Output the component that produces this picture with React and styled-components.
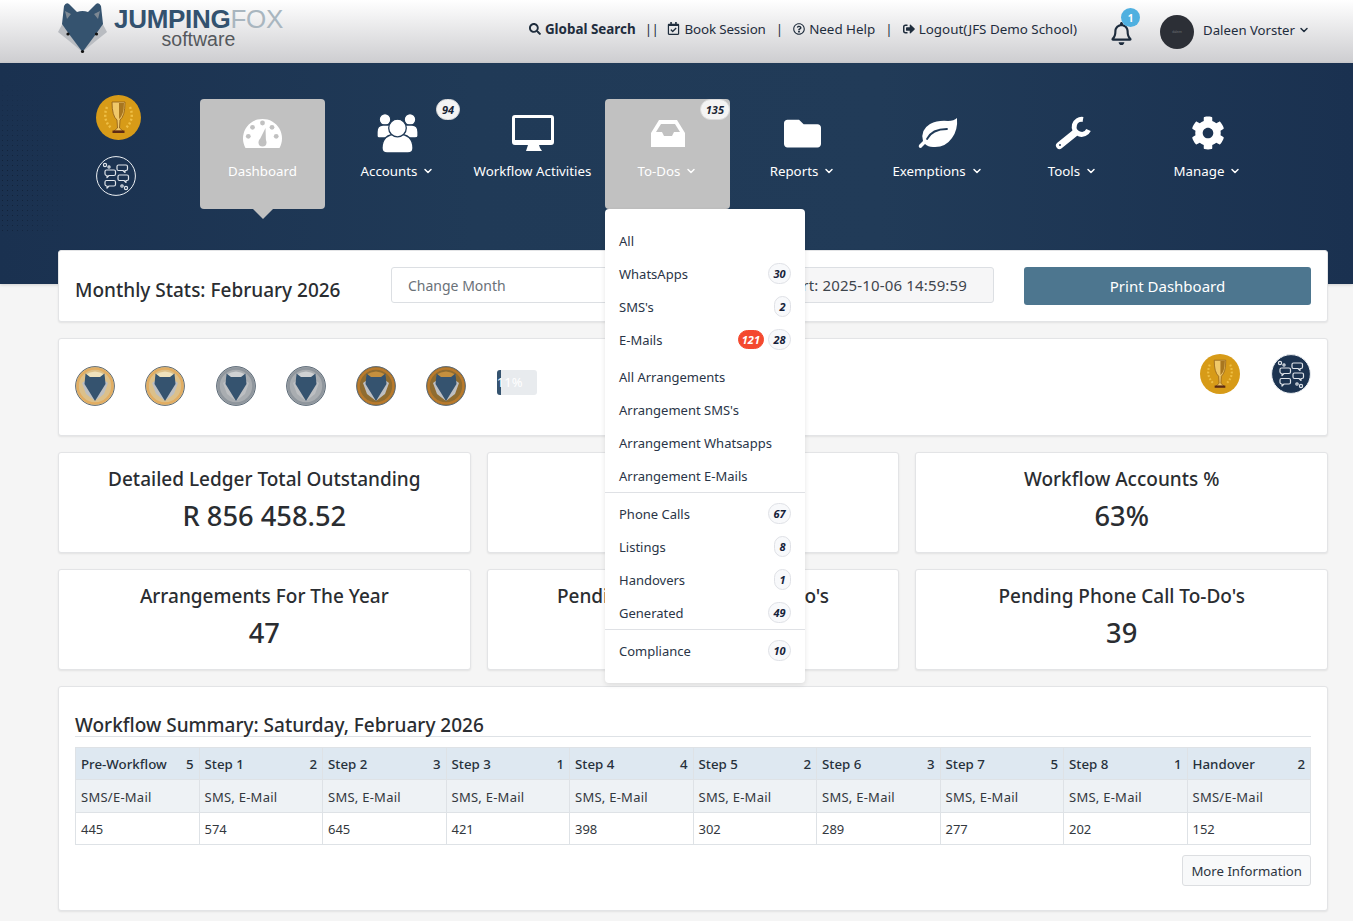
import React from 'react'
import styled, { createGlobalStyle } from 'styled-components'
import { FaFolder, FaCog, FaSearch, FaRegCalendarCheck, FaRegQuestionCircle, FaSignOutAlt, FaRegBell } from 'react-icons/fa'
import { FiChevronDown } from 'react-icons/fi'

const GlobalStyle = createGlobalStyle`
    * { box-sizing: border-box; }
    html, body { margin: 0; padding: 0; height: 921px; overflow: hidden; }
    body {
        background: #f5f5f5;
        font-family: "Noto Sans", "Open Sans", sans-serif;
        color: #212529;
    }
`

const Header = styled.header`
    height: 63px;
    display: flex;
    align-items: center;
    padding: 0 43px 0 58px;
    background: linear-gradient(180deg, #ffffff 0%, #cdcdd0 100%);
`
const Logo = styled.div`
    display: flex;
    align-items: flex-start;
    height: 63px;
    padding-top: 2px;
`
const LogoText = styled.div`
    margin: 4px 0 0 6px;
    font-family: "Liberation Sans", Arial, sans-serif;
    text-align: center;
    line-height: 1;
`
const LogoTitle = styled.div`
    font-size: 26px;
    font-weight: 700;
    letter-spacing: -0.3px;
    color: #33526f;
    span { font-weight: 400; color: #a9b6bf; }
`
const LogoSub = styled.div`
    margin-top: -2px;
    font-size: 19.5px;
    color: #55585c;
`
const TopLinks = styled.nav`
    margin-left: auto;
    display: flex;
    align-items: center;
    gap: 7px;
    font-size: 13.4px;
    color: #1f2d3d;
    margin-top: -6px;
`
const TopLink = styled.span`
    display: inline-flex;
    align-items: center;
    gap: 4px;
    font-weight: ${(p) => (p.$bold ? 700 : 400)};
    letter-spacing: ${(p) => (p.$tight ? '-0.15px' : '0')};
    white-space: nowrap;
    svg { flex: none; }
`
const Sep = styled.span`
    margin: 0 ${(p) => (p.$double ? 2 : 3)}px;
    letter-spacing: ${(p) => (p.$double ? '-0.5px' : '0')};
`
const Bell = styled.div`
    position: relative;
    margin: 4px 27px 0 33px;
    display: flex;
    font-size: 23px;
    color: #1c2b3c;
`
const BellBadge = styled.span`
    position: absolute;
    top: -14px;
    left: 11px;
    width: 19px;
    height: 19px;
    border-radius: 50%;
    background: #4fb0e0;
    color: #fff;
    font-size: 10px;
    font-weight: 700;
    display: flex;
    align-items: center;
    justify-content: center;
`
const Avatar = styled.div`
    width: 34px;
    height: 34px;
    border-radius: 50%;
    background: #2c2f36;
    margin-right: 9px;
    color: #77787c;
    font-size: 3px;
    display: flex;
    align-items: center;
    justify-content: center;
`
const UserName = styled.span`
    display: inline-flex;
    align-items: center;
    gap: 3px;
    margin-top: -3px;
    font-size: 13.2px;
    color: #1f2d3d;
`

const Hero = styled.section`
    position: relative;
    height: 221px;
    background: linear-gradient(90deg, #1a3150 0%, #203a57 35%, #213b58 65%, #1a3150 100%);
    padding: 32px 0 0 96px;
    display: flex;
    overflow: visible;
    box-shadow: 0 1px 3px rgba(0, 0, 0, 0.15);
    &::before {
        content: '';
        position: absolute;
        left: 0;
        top: 20px;
        width: 70px;
        height: 150px;
        background: radial-gradient(circle, rgba(0, 0, 0, 0.3) 0.7px, transparent 1px) 0 0 / 5px 5px;
        -webkit-mask-image: radial-gradient(ellipse at 0 70%, #000 20%, transparent 75%);
        mask-image: radial-gradient(ellipse at 0 70%, #000 20%, transparent 75%);
    }
`
const AwardColumn = styled.div`
    width: 104px;
    display: flex;
    flex-direction: column;
    align-items: flex-start;
    gap: 16px;
    position: relative;
`
const MainNav = styled.nav`
    display: flex;
    gap: 10px;
    align-items: flex-start;
    position: relative;
    margin-top: 4px;
`
const NavItem = styled.div`
    position: relative;
    width: 125px;
    height: 110px;
    border-radius: 4px;
    background: ${(p) => (p.$active ? '#c1c1c1' : 'transparent')};
    color: #fff;
    display: flex;
    flex-direction: column;
    align-items: center;
    padding-top: 14px;
    font-size: 13.3px;
`
const NavArrow = styled.span`
    position: absolute;
    left: 50%;
    bottom: -10px;
    margin-left: -10px;
    border-left: 10px solid transparent;
    border-right: 10px solid transparent;
    border-top: 10px solid #c1c1c1;
`
const NavIcon = styled.div`
    height: 40px;
    display: flex;
    align-items: center;
    justify-content: center;
    margin-bottom: 9px;
`
const NavLabel = styled.div`
    display: flex;
    align-items: center;
    gap: 5px;
    white-space: nowrap;
`
const NavBadge = styled.span`
    position: absolute;
    top: 0;
    right: 0;
    min-width: 24px;
    height: 21px;
    padding: 0 5px;
    border-radius: 11px;
    background: #f4f4f4;
    border: 1px solid #dcdcdc;
    color: #1a2433;
    font-size: 11px;
    font-weight: 700;
    font-style: italic;
    display: flex;
    align-items: center;
    justify-content: center;
`

const Dropdown = styled.div`
    position: absolute;
    left: 405px;
    top: 110px;
    width: 200px;
    height: 474px;
    z-index: 10;
    background: #fff;
    border-radius: 4px;
    padding: 15px 0;
    box-shadow: 0 2px 5px rgba(0, 0, 0, 0.1);
    color: #2a3547;
    font-size: 13px;
`
const DropItem = styled.div`
    height: 33px;
    padding: 0 14px;
    display: flex;
    align-items: center;
    gap: 4px;
    white-space: nowrap;
`
const DropLabel = styled.span`
    margin-right: auto;
`
const DropGroup = styled.div`
    padding-top: ${(p) => p.$top || 0}px;
    padding-bottom: ${(p) => p.$bottom || 0}px;
    border-bottom: ${(p) => (p.$line ? '1px solid #dfe1e5' : 'none')};
`
const Pill = styled.span`
    min-width: ${(p) => (p.$wide ? 23 : 17)}px;
    height: ${(p) => (p.$red ? 19 : 21)}px;
    padding: 0 ${(p) => (p.$red ? 3 : 4)}px;
    border-radius: 11px;
    border: 1px solid ${(p) => (p.$red ? '#f4492f' : '#dfe1e6')};
    background: ${(p) => (p.$red ? '#f4492f' : '#f8f9fb')};
    color: ${(p) => (p.$red ? '#fff' : '#16233a')};
    font-size: 11px;
    font-weight: 700;
    font-style: italic;
    display: flex;
    align-items: center;
    justify-content: center;
`

const Content = styled.main`
    position: relative;
    margin-top: -34px;
    padding: 0 25px 0 58px;
    display: flex;
    flex-direction: column;
    gap: 16px;
`
const Card = styled.div`
    background: #fff;
    border: 1px solid #e3e4e6;
    border-radius: 3px;
    box-shadow: 0 1px 2px rgba(0, 0, 0, 0.08);
`
const StatsBar = styled(Card)`
    height: 72px;
    display: flex;
    align-items: center;
    padding: 0 16px;
`
const BarTitle = styled.h2`
    margin: 7px 0 0;
    width: 316px;
    flex: none;
    font-size: 19px;
    font-weight: 500;
    color: #2a2d31;
    white-space: nowrap;
`
const FieldBox = styled.div`
    height: 36px;
    margin-top: -2px;
    padding: 0 16px;
    display: flex;
    align-items: center;
    font-size: ${(p) => (p.$muted ? 15 : 14)}px;
    letter-spacing: ${(p) => (p.$muted ? '0.15px' : '0')};
    border: 1px solid #dcdfe3;
    border-radius: 3px;
    white-space: nowrap;
    color: ${(p) => (p.$muted ? '#3e454d' : '#6a7178')};
    background: ${(p) => (p.$muted ? '#f6f6f7' : '#fff')};
    width: ${(p) => p.$width}px;
    justify-content: ${(p) => (p.$muted ? 'flex-end' : 'flex-start')};
    padding-right: ${(p) => (p.$muted ? 26 : 16)}px;
    margin-left: ${(p) => p.$left || 0}px;
`
const PrintButton = styled.button`
    flex: none;
    width: 287px;
    height: 38px;
    margin-left: 30px;
    border: 0;
    border-radius: 3px;
    background: #4d768f;
    color: #fff;
    font-family: inherit;
    font-size: 15px;
`
const MedalsCard = styled(Card)`
    height: 98px;
    display: flex;
    justify-content: space-between;
    padding: 15px 16px 0;
`
const MedalRow = styled.div`
    display: flex;
    align-items: flex-start;
    gap: 30.3px;
    padding-top: 12px;
`
const Progress = styled.div`
    position: relative;
    margin-top: 4px;
    width: 40px;
    height: 25px;
    border-radius: 3px;
    background: #e8ebee;
    overflow: hidden;
    color: #fff;
    font-size: 13px;
    line-height: 25px;
    text-align: center;
    padding-right: 15px;
`
const ProgressFill = styled.span`
    position: absolute;
    left: 0;
    top: 0;
    bottom: 0;
    background: #35536f;
`
const ProgressText = styled.span`
    position: relative;
`
const AwardRow = styled.div`
    display: flex;
    gap: 31px;
`
const StatGrid = styled.div`
    display: grid;
    grid-template-columns: repeat(3, 1fr);
    gap: 16px;
`
const StatCard = styled(Card)`
    height: 101px;
    text-align: center;
    padding-top: 12px;
`
const StatTitle = styled.div`
    font-size: 19px;
    font-weight: 500;
    line-height: 28px;
    color: #2a2d31;
    white-space: nowrap;
`
const StatValue = styled.div`
    margin-top: 5px;
    font-size: 27.3px;
    font-weight: 500;
    line-height: 36px;
    color: #2a2d31;
`
const SummaryCard = styled(Card)`
    height: 225px;
    padding: 25px 16px 0;
`
const SummaryTitle = styled.h2`
    margin: 0 0 10px;
    height: 25px;
    border-bottom: 1px solid #dee2e6;
    font-size: 19px;
    font-weight: 500;
    line-height: 26px;
    color: #2a2d31;
`
const Table = styled.table`
    width: 100%;
    border-collapse: collapse;
    table-layout: fixed;
    font-size: 13px;
    color: #33383e;
`
const Cell = styled.td`
    border: 1px solid #dee2e6;
    height: 32.4px;
    padding: ${(p) => (p.$head ? 0 : 2)}px 5px 0;
    background: ${(p) => p.$bg || '#fff'};
    letter-spacing: ${(p) => (p.$spaced ? '0.25px' : '0')};
    white-space: nowrap;
`
const HeadCell = styled.div`
    display: flex;
    justify-content: space-between;
    font-size: 13.3px;
    font-weight: 500;
    color: #26303b;
`
const TableFooter = styled.div`
    display: flex;
    justify-content: flex-end;
    margin-top: 10px;
`
const MoreButton = styled.button`
    height: 31px;
    padding: 0 8px;
    border: 1px solid #dcdee1;
    border-radius: 3px;
    background: #f8f9fa;
    color: #2b3440;
    font-family: inherit;
    font-size: 13.2px;
`

const BigFox = () => (
    <svg width="50" height="52" viewBox="0 0 50 52">
        <path d="M0 30 L7 17 L24.5 50 L10 38 Z M49 30 L42 17 L24.5 50 L39 38 Z" fill="#b9bcc1" />
        <path d="M6 4 Q8 0 11 2 L19 10 Q24.5 8 30 10 L38 2 Q41 0 43 4 L45 22 L38 32 L24.5 50 L11 32 L4 22 Z" fill="#35536f" />
        <path d="M7 9 l6 3 l-4 5 Z M42 9 l-6 3 l4 5 Z" fill="#7d8893" />
        <circle cx="10" cy="32" r="1.6" fill="#111" />
        <circle cx="38.5" cy="32" r="1.6" fill="#111" />
        <circle cx="24.5" cy="49.5" r="1.6" fill="#111" />
    </svg>
)

const Medal = ({ rim, face, top }) => (
    <svg width="40" height="40" viewBox="0 0 40 40">
        <circle cx="20" cy="20" r="19.4" fill={face} stroke="#5d6b78" strokeWidth="1" />
        <circle cx="20" cy="20" r="17.4" fill="none" stroke={rim} strokeWidth="2.4" />
        <path d="M10 9 Q20 2 30 9 L28 14 H12 Z" fill={top} />
        <path d="M7 17 L11 14 L20 35 L11 28 Z M33 17 L29 14 L20 35 L29 28 Z" fill="#bdbfc2" />
        <path d="M10.5 7.5 L15 11 L25 11 L29.5 7.5 L30.5 18 L20 35 L9.5 18 Z" fill="#35536f" />
    </svg>
)

const Trophy = ({ size }) => (
    <svg width={size} height={size} viewBox="0 0 45 45">
        <circle cx="22.5" cy="22.5" r="22.5" fill="#d79b18" />
        <g fill="none" stroke="#efbf45" strokeWidth="2.4" strokeDasharray="2 2">
            <path d="M11 12 Q6 24 15 33" />
            <path d="M34 12 Q39 24 30 33" />
        </g>
        <path d="M16 7 H29 Q29 21 24 25 L23.5 33 L27 36 H18 L21.5 33 L21 25 Q16 21 16 7 Z" fill="#f0c86a" stroke="#8a5a1a" strokeWidth="0.8" />
        <path d="M23 8 H28 Q28 20 23 24 Z" fill="#a8761f" />
        <rect x="16.5" y="35.5" width="12" height="2.5" fill="#5d2b14" />
    </svg>
)

const ChatBadge = ({ size, filled }) => (
    <svg width={size} height={size} viewBox="0 0 40 40">
        <circle cx="20" cy="20" r="19.4" fill={filled ? '#1c3350' : 'none'} stroke="#eef1f4" strokeWidth="1" />
        <g fill="none" stroke="#dfe4ea" strokeWidth="1.2" strokeLinejoin="round">
            <path d="M10.5 14 H18 Q19.5 14 19.5 15.5 V18 Q19.5 19.5 18 19.5 H13 L11 21.5 V19.5 Q9 19.5 9 18 V15.5 Q9 14 10.5 14 Z" />
            <path d="M10.5 24.5 H18 Q19.5 24.5 19.5 26 V28.5 Q19.5 30 18 30 H13 L11 32 V30 Q9 30 9 28.5 V26 Q9 24.5 10.5 24.5 Z" />
            <path d="M22.5 9 H30 Q31.5 9 31.5 10.5 V13 Q31.5 14.5 30 14.5 H29 V16.5 L27 14.5 H22.5 Q21 14.5 21 13 V10.5 Q21 9 22.5 9 Z" />
            <path d="M23.5 19 H31 Q32.5 19 32.5 20.5 V23 Q32.5 24.5 31 24.5 H30 V26.5 L28 24.5 H23.5 Q22 24.5 22 23 V20.5 Q22 19 23.5 19 Z" />
            <circle cx="9" cy="9" r="1.6" />
            <circle cx="13" cy="11" r="1.1" />
            <circle cx="26" cy="30" r="1.2" />
            <circle cx="30" cy="32" r="1.6" />
        </g>
    </svg>
)

const GaugeIcon = () => (
    <svg width="39" height="30" viewBox="0 0 39 30">
        <path d="M2.5 30 A19.5 19.5 0 1 1 36.5 30 Z" fill="#fff" />
        <g fill="#c1c1c1">
            <circle cx="19.5" cy="5" r="2.4" />
            <circle cx="9.5" cy="9.3" r="2.4" />
            <circle cx="29" cy="9.3" r="2.4" />
            <circle cx="5.3" cy="18.3" r="2.4" />
            <circle cx="33.2" cy="18.3" r="2.4" />
            <circle cx="19.5" cy="24.5" r="4" />
            <path d="M22.5 10 L23 25 L16 23 Z" />
        </g>
    </svg>
)

const UsersIcon = () => (
    <svg width="42" height="40" viewBox="0 0 42 40" fill="#fff" stroke="#203a57" strokeWidth="1.3">
        <circle cx="8" cy="6.5" r="5.8" />
        <circle cx="33" cy="6.5" r="5.8" />
        <path d="M0 19 Q0 12 6 12 H35 Q41 12 41 19 V23 Q41 25 38 25 H3 Q0 25 0 23 Z" />
        <path d="M5 35 Q5 21 20.5 21 Q36 21 36 35 Q36 40 31 40 H10 Q5 40 5 35 Z" />
        <circle cx="20.5" cy="15" r="8.8" />
    </svg>
)

const MonitorIcon = () => (
    <svg width="42" height="36" viewBox="0 0 42 36">
        <path fillRule="evenodd" d="M3 0 H39 Q42 0 42 3 V27 Q42 30 39 30 H27 L28 33 L30 36 H14 L15 33 L16 30 H3 Q0 30 0 27 V3 Q0 0 3 0 Z M3 3 V25 H39 V3 Z" fill="#fff" />
    </svg>
)

const InboxIcon = () => (
    <svg width="34" height="27" viewBox="0 0 34 27">
        <path fillRule="evenodd" d="M8 0 H26 L34 13 V27 H0 V13 Z M10 4 L5 12 H11 L13 16 H21 L23 12 H29 L24 4 Z" fill="#fff" />
    </svg>
)

const LeafIcon = () => (
    <svg width="40" height="30" viewBox="0 0 40 30">
        <path d="M39 0 Q40 12 34 20 Q27 30 15 29 Q10 29 7 26 L3 30 Q0 30 1 27 L5 23 Q2 12 12 6 Q20 2 30 3 Q36 3 39 0 Z" fill="#fff" />
        <path d="M9 21 Q14 11 29 11" fill="none" stroke="#203a57" strokeWidth="1.8" strokeLinecap="round" />
    </svg>
)

const WrenchIcon = () => (
    <svg width="36" height="34" viewBox="0 0 36 34" fill="none" stroke="#fff" strokeLinecap="round">
        <path d="M28 3.5 A7.5 7.5 0 1 0 33.5 14" strokeWidth="5" strokeLinecap="butt" />
        <path d="M20 17 L4.5 29.5" strokeWidth="7" />
        <circle cx="5" cy="29" r="1" fill="#203a57" stroke="none" />
    </svg>
)

const chevron = <FiChevronDown size={12} strokeWidth={3} />

const stats = [
    ['Detailed Ledger Total Outstanding', 'R 856 458.52'],
    ['Total Arrears', '12'],
    ['Workflow Accounts %', '63%'],
    ['Arrangements For The Year', '47'],
    ['Pending Arrangement To-Do\'s', '121'],
    ['Pending Phone Call To-Do\'s', '39'],
]

const steps = [
    ['Pre-Workflow', 5, 'SMS/E-Mail', 445],
    ['Step 1', 2, 'SMS, E-Mail', 574],
    ['Step 2', 3, 'SMS, E-Mail', 645],
    ['Step 3', 1, 'SMS, E-Mail', 421],
    ['Step 4', 4, 'SMS, E-Mail', 398],
    ['Step 5', 2, 'SMS, E-Mail', 302],
    ['Step 6', 3, 'SMS, E-Mail', 289],
    ['Step 7', 5, 'SMS, E-Mail', 277],
    ['Step 8', 1, 'SMS, E-Mail', 202],
    ['Handover', 2, 'SMS/E-Mail', 152],
]

const medals = [
    ['#e2ad62', '#dcc08a', '#efe2bd'],
    ['#e2ad62', '#dcc08a', '#efe2bd'],
    ['#8f969d', '#a9adb1', '#cfd1d3'],
    ['#8f969d', '#a9adb1', '#cfd1d3'],
    ['#b97a2c', '#8f6c30', '#c48f3e'],
    ['#b97a2c', '#8f6c30', '#c48f3e'],
]

const Row = ({ label, count, red }) => (
    <DropItem>
        <DropLabel>{label}</DropLabel>
        {red && <Pill $red $wide>{red}</Pill>}
        {count && <Pill $wide={count.length > 1}>{count}</Pill>}
    </DropItem>
)

export default function App() {
    return (
        <>
            <GlobalStyle />
            <Header>
                <Logo>
                    <BigFox />
                    <LogoText>
                        <LogoTitle>JUMPING<span>FOX</span></LogoTitle>
                        <LogoSub>software</LogoSub>
                    </LogoText>
                </Logo>
                <TopLinks>
                    <TopLink $bold><FaSearch size={12} />Global Search</TopLink>
                    <Sep $double>||</Sep>
                    <TopLink $tight><FaRegCalendarCheck size={13} />Book Session</TopLink>
                    <Sep>|</Sep>
                    <TopLink><FaRegQuestionCircle size={12} />Need Help</TopLink>
                    <Sep>|</Sep>
                    <TopLink><FaSignOutAlt size={12} />Logout(JFS Demo School)</TopLink>
                </TopLinks>
                <Bell>
                    <FaRegBell />
                    <BellBadge>1</BellBadge>
                </Bell>
                <Avatar>daleen</Avatar>
                <UserName>Daleen Vorster{chevron}</UserName>
            </Header>
            <Hero>
                <AwardColumn>
                    <Trophy size={45} />
                    <ChatBadge size={40} />
                </AwardColumn>
                <MainNav>
                    <NavItem $active>
                        <NavIcon><GaugeIcon /></NavIcon>
                        <NavLabel>Dashboard</NavLabel>
                        <NavArrow />
                    </NavItem>
                    <NavItem>
                        <NavIcon><UsersIcon /></NavIcon>
                        <NavLabel>Accounts {chevron}</NavLabel>
                        <NavBadge>94</NavBadge>
                    </NavItem>
                    <NavItem>
                        <NavIcon><MonitorIcon /></NavIcon>
                        <NavLabel>Workflow Activities</NavLabel>
                    </NavItem>
                    <NavItem $active>
                        <NavIcon><InboxIcon /></NavIcon>
                        <NavLabel>To-Dos {chevron}</NavLabel>
                        <NavBadge>135</NavBadge>
                    </NavItem>
                    <NavItem>
                        <NavIcon><FaFolder size={37} /></NavIcon>
                        <NavLabel>Reports {chevron}</NavLabel>
                    </NavItem>
                    <NavItem>
                        <NavIcon><LeafIcon /></NavIcon>
                        <NavLabel>Exemptions {chevron}</NavLabel>
                    </NavItem>
                    <NavItem>
                        <NavIcon><WrenchIcon /></NavIcon>
                        <NavLabel>Tools {chevron}</NavLabel>
                    </NavItem>
                    <NavItem>
                        <NavIcon><FaCog size={34} /></NavIcon>
                        <NavLabel>Manage {chevron}</NavLabel>
                    </NavItem>
                    <Dropdown>
                        <DropGroup $bottom={4}>
                            <Row label="All" />
                            <Row label="WhatsApps" count="30" />
                            <Row label="SMS's" count="2" />
                            <Row label="E-Mails" red="121" count="28" />
                        </DropGroup>
                        <DropGroup $line $bottom={0}>
                            <Row label="All Arrangements" />
                            <Row label="Arrangement SMS's" />
                            <Row label="Arrangement Whatsapps" />
                            <Row label="Arrangement E-Mails" />
                        </DropGroup>
                        <DropGroup $line $top={4}>
                            <Row label="Phone Calls" count="67" />
                            <Row label="Listings" count="8" />
                            <Row label="Handovers" count="1" />
                            <Row label="Generated" count="49" />
                        </DropGroup>
                        <DropGroup $top={4}>
                            <Row label="Compliance" count="10" />
                        </DropGroup>
                    </Dropdown>
                </MainNav>
            </Hero>
            <Content>
                <StatsBar>
                    <BarTitle>Monthly Stats: February 2026</BarTitle>
                    <FieldBox $width={230}>Change Month</FieldBox>
                    <FieldBox $muted $width={363} $left={10}>Last Import: 2025-10-06 14:59:59</FieldBox>
                    <PrintButton>Print Dashboard</PrintButton>
                </StatsBar>
                <MedalsCard>
                    <MedalRow>
                        {medals.map(([rim, face, top], i) => <Medal key={i} rim={rim} face={face} top={top} />)}
                        <Progress>
                            <ProgressFill style={{ width: '11%' }} />
                            <ProgressText>11%</ProgressText>
                        </Progress>
                    </MedalRow>
                    <AwardRow>
                        <Trophy size={40} />
                        <ChatBadge size={40} filled />
                    </AwardRow>
                </MedalsCard>
                <StatGrid>
                    {stats.map(([title, value]) => (
                        <StatCard key={title}>
                            <StatTitle>{title}</StatTitle>
                            <StatValue>{value}</StatValue>
                        </StatCard>
                    ))}
                </StatGrid>
                <SummaryCard>
                    <SummaryTitle>Workflow Summary: Saturday, February 2026</SummaryTitle>
                    <Table>
                        <tbody>
                            <tr>
                                {steps.map(([name, count]) => (
                                    <Cell key={name} $head $bg="#dee8f1">
                                        <HeadCell><span>{name}</span><span>{count}</span></HeadCell>
                                    </Cell>
                                ))}
                            </tr>
                            <tr>
                                {steps.map(([name, , channel]) => <Cell key={name} $bg="#eef2f5" $spaced>{channel}</Cell>)}
                            </tr>
                            <tr>
                                {steps.map(([name, , , total]) => <Cell key={name}>{total}</Cell>)}
                            </tr>
                        </tbody>
                    </Table>
                    <TableFooter>
                        <MoreButton>More Information</MoreButton>
                    </TableFooter>
                </SummaryCard>
            </Content>
        </>
    )
}
